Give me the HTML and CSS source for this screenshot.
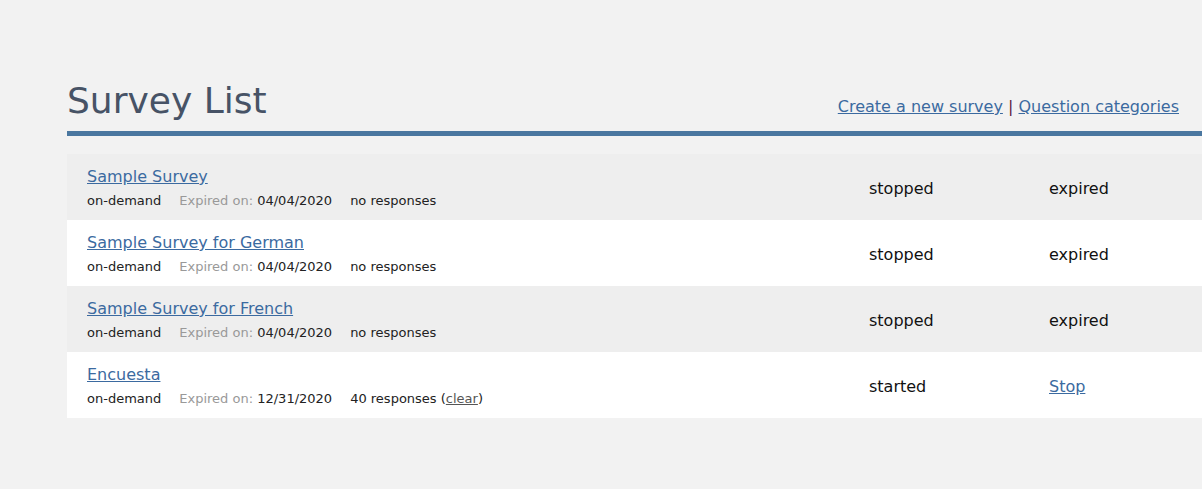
FILE: index.html
```html
<!DOCTYPE html>
<html>
<head>
<meta charset="utf-8">
<title>Survey List</title>
<link rel="stylesheet" href="styles.css">
</head>
<body>
<div class="page">
  <div class="header">
    <h1 class="title">Survey List</h1>
    <div class="actions">
      <a href="#">Create a new survey</a> <span class="sep">|</span> <a href="#">Question categories</a>
    </div>
  </div>
  <div class="list">
    <div class="row odd">
      <div class="info">
        <a class="name" href="#">Sample Survey</a>
        <div class="meta"><span>on-demand</span><span><span class="label">Expired on:</span> 04/04/2020</span><span>no responses</span></div>
      </div>
      <div class="status">stopped</div>
      <div class="state">expired</div>
    </div>
    <div class="row">
      <div class="info">
        <a class="name" href="#">Sample Survey for German</a>
        <div class="meta"><span>on-demand</span><span><span class="label">Expired on:</span> 04/04/2020</span><span>no responses</span></div>
      </div>
      <div class="status">stopped</div>
      <div class="state">expired</div>
    </div>
    <div class="row odd">
      <div class="info">
        <a class="name" href="#">Sample Survey for French</a>
        <div class="meta"><span>on-demand</span><span><span class="label">Expired on:</span> 04/04/2020</span><span>no responses</span></div>
      </div>
      <div class="status">stopped</div>
      <div class="state">expired</div>
    </div>
    <div class="row">
      <div class="info">
        <a class="name" href="#">Encuesta</a>
        <div class="meta"><span>on-demand</span><span><span class="label">Expired on:</span> 12/31/2020</span><span>40 responses (<a class="clear" href="#">clear</a>)</span></div>
      </div>
      <div class="status">started</div>
      <div class="state"><a class="stop" href="#">Stop</a></div>
    </div>
  </div>
</div>
</body>
</html>
```

FILE: styles.css
```css
html, body {
  margin: 0;
  padding: 0;
  background: #f2f2f2;
}
body {
  font-family: "DejaVu Sans", Verdana, sans-serif;
  color: #111;
}
.page {
  margin-left: 67px;
  padding-top: 80px;
}
.header {
  display: flex;
  justify-content: space-between;
  align-items: flex-end;
  border-bottom: 5px solid #4a77a0;
  padding-bottom: 9px;
  padding-right: 23px;
}
.title {
  margin: 0;
  font-size: 36px;
  line-height: 42px;
  font-weight: normal;
  color: #475366;
}
.actions {
  font-size: 16px;
  line-height: 19px;
  padding-bottom: 6px;
  color: #5a1a44;
}
.actions a {
  color: #3b6aa0;
}
.list {
  margin-top: 18px;
}
.row {
  display: grid;
  grid-template-columns: 1fr 180px 153px;
  align-items: center;
  background: #ffffff;
  padding: 13px 0 11px 20px;
}
.row.odd {
  background: #eeeeee;
}
.name {
  display: block;
  width: max-content;
  font-size: 16px;
  line-height: 19px;
  color: #3b6aa0;
}
.meta {
  display: flex;
  gap: 18px;
  margin-top: 7px;
  font-size: 13px;
  line-height: 16px;
  color: #222;
}
.label {
  color: #999;
}
.clear {
  color: #555;
}
.status, .state {
  font-size: 16px;
  line-height: 19px;
  color: #111;
}
.stop {
  color: #3b6aa0;
}
```
